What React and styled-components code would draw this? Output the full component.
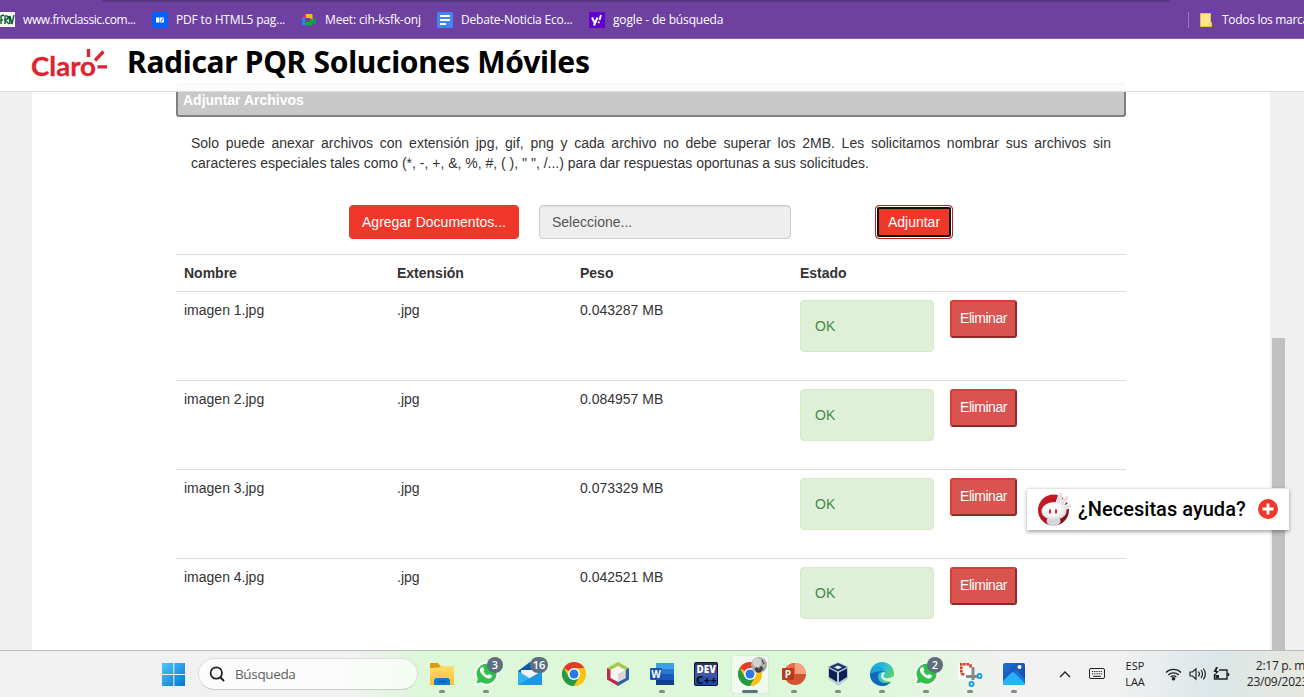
import React from "react";
import styled, { createGlobalStyle } from "styled-components";

const Global = createGlobalStyle`
  * { box-sizing: border-box; }
  html, body { margin: 0; padding: 0; overflow: hidden; }
  body { font-family: "Liberation Sans", Arial, sans-serif; font-size: 14px; color: #333; background: #fff; }
`;

const Screen = styled.div`
  width: 1304px;
  height: 697px;
  display: flex;
  flex-direction: column;
  overflow: hidden;
  position: relative;
`;

/* ---------- bookmarks bar ---------- */
const BookmarksBar = styled.nav`
  flex: none;
  height: 39px;
  display: flex;
  align-items: center;
  background: #6e41a0;
  border-bottom: 1px solid #8c5fb4;
  position: relative;
  z-index: 3;
  padding-top: 1px;
`;
const TabStripEdge = styled.div`
  position: absolute;
  top: 0;
  left: 102px;
  width: 1068px;
  height: 2px;
  background: #57357f;
  border-radius: 0 0 6px 6px / 0 0 2px 2px;
`;
const Bookmark = styled.div`
  flex: none;
  display: flex;
  align-items: center;
  gap: ${(p) => p.$gap || 8}px;
  width: ${(p) => p.$w}px;
  height: 100%;
  white-space: nowrap;
  font-family: "Open Sans", "Noto Sans", sans-serif;
  font-size: 12px;
  letter-spacing: ${(p) => p.$ls || 0}px;
  color: #fff;
  svg { flex: none; display: block; }
`;
const Spacer = styled.div`
  flex: 1;
`;
const BarDivider = styled.div`
  width: 1px;
  height: 16px;
  margin-right: 11px;
  background: #9a78bd;
`;

/* ---------- site header ---------- */
const SiteHeader = styled.header`
  flex: none;
  height: 53px;
  display: flex;
  align-items: flex-start;
  padding: 8px 0 0 30px;
  background: rgba(255, 255, 255, 0.95);
  border-bottom: 1px solid #dcdcdc;
  position: relative;
  z-index: 2;
`;
const Title = styled.h1`
  margin: -7px 0 0 17px;
  font: 700 30px/44px "Noto Sans", sans-serif;
  letter-spacing: ${(p) => p.$ls}px;
  color: #000;
  white-space: nowrap;
`;

/* ---------- page ---------- */
const Page = styled.main`
  flex: none;
  height: 611px;
  margin-top: -53px;
  display: flex;
  background: #f0f0f0;
`;
const Sheet = styled.section`
  width: 1238px;
  margin-left: 32px;
  padding: 44px 144px 0;
  background: #fff;
`;
const ScrollTrack = styled.div`
  width: 34px;
  padding: 299px 0 0 2px;
`;
const ScrollThumb = styled.div`
  width: 13px;
  height: 312px;
  background: #c1c1c1;
`;
const PanelHeading = styled.div`
  height: 34px;
  padding: 0 5px;
  border: 2px solid #808080;
  border-radius: 3px;
  background: #c8c8c8;
  color: #fff;
  font-weight: 700;
  line-height: 30px;
`;
const Notice = styled.p`
  margin: 16px 15px 32px;
  line-height: 20px;
  text-align: justify;
`;
const UploadRow = styled.div`
  display: flex;
  height: 34px;
  margin: 0 0 15px 173px;
`;
const RedButton = styled.button`
  width: ${(p) => p.$w}px;
  height: 34px;
  padding: 0;
  border: 1px solid ${(p) => (p.$focused ? "#b8231b" : "#e8352a")};
  border-radius: 4px;
  background: #ef382a;
  box-shadow: ${(p) => (p.$focused ? "inset 0 0 0 1px #fff, inset 0 0 0 3px #101010" : "none")};
  color: #fff;
  font: 14px "Liberation Sans", Arial, sans-serif;
`;
const FileField = styled.div`
  width: 252px;
  height: 34px;
  margin: 0 84px 0 20px;
  padding: 0 12px;
  border: 1px solid #ccc;
  border-radius: 4px;
  background: #eee;
  box-shadow: inset 0 1px 1px rgba(0, 0, 0, 0.075);
  color: #555;
  line-height: 32px;
`;
const Row = styled.div`
  display: grid;
  grid-template-columns: 213px 183px 220px 150px 184px;
  height: ${(p) => (p.$head ? 37 : 89)}px;
  border-top: 1px solid #ddd;
  font-weight: ${(p) => (p.$head ? 700 : 400)};
`;
const Cell = styled.div`
  padding: 8px;
  line-height: 20px;
`;
const Status = styled.div`
  height: 52px;
  padding: 15px 14px;
  border: 1px solid #d6e9c6;
  border-radius: 4px;
  background: #dff0d8;
  color: #468847;
`;
const DeleteButton = styled.button`
  display: block;
  width: 67px;
  height: 38px;
  padding: 0 0 2px;
  border: 2px solid;
  border-color: #d43f3a #8c2a27 #8c2a27 #d43f3a;
  border-radius: 3px;
  background: #d9534f;
  color: #fff;
  font: 14px "Liberation Sans", Arial, sans-serif;
  letter-spacing: -0.45px;
`;

/* ---------- help widget ---------- */
const HelpWidget = styled.aside`
  position: absolute;
  left: 1027px;
  top: 488px;
  z-index: 4;
  width: 262px;
  height: 42px;
  display: flex;
  align-items: center;
  padding-left: 9px;
  background: #fff;
  border-top: 1px solid #e4e4e4;
  box-shadow: 0 2px 4px rgba(0, 0, 0, 0.35);
  svg { flex: none; margin-top: -1px; }
`;
const HelpText = styled.span`
  width: 186px;
  margin-top: -2px;
  padding-left: 6px;
  font: 500 20px/24px Roboto, sans-serif;
  letter-spacing: 0.03px;
  color: #000;
  white-space: nowrap;
`;

/* ---------- taskbar ---------- */
const Taskbar = styled.footer`
  flex: none;
  height: 47px;
  display: flex;
  align-items: center;
  padding-left: 162px;
  border-top: 1px solid #b8bdb8;
  background: linear-gradient(90deg, #f1f1f1 0, #f0f1f0 355px, #ddf7d9 420px, #dcf8d8 820px, #e2f6df 920px, #f1f1f1 1010px, #f0f1f1 1120px, #dce6e8 1215px, #e6e8df 1304px);
  position: relative;
  z-index: 5;
  font-family: "Open Sans", "Noto Sans", sans-serif;
  > svg { flex: none; }
`;
const SearchBox = styled.div`
  flex: none;
  width: 220px;
  height: 32px;
  margin: 0 2px 0 12px;
  padding-left: 10px;
  display: flex;
  align-items: center;
  gap: 10px;
  border: 1px solid #dcdfdc;
  border-bottom-color: #c8cdc8;
  border-radius: 16px;
  background: linear-gradient(90deg, #fcfcfc 60%, #f4fcf3);
  color: #606060;
  font-size: 13.5px;
  letter-spacing: -0.35px;
`;
const AppCell = styled.div`
  position: relative;
  flex: none;
  width: 44px;
  height: 46px;
  svg { display: block; position: relative; }
`;
const ActivePlate = styled.div`
  position: absolute;
  left: 3px;
  top: 4px;
  width: 38px;
  height: 39px;
  border-radius: 4px;
  background: #f0fbee;
  border: 1px solid #d8ecd5;
`;
const RunMark = styled.div`
  position: absolute;
  bottom: 4px;
  left: ${(p) => (p.$active ? 14 : 19)}px;
  width: ${(p) => (p.$active ? 16 : 6)}px;
  height: 3px;
  border-radius: 2px;
  background: ${(p) => (p.$active ? "#5b7184" : "#828c82")};
`;
const Badge = styled.span`
  position: absolute;
  top: 6px;
  left: ${(p) => (p.$wide ? 22 : 23)}px;
  width: ${(p) => (p.$wide ? 18 : 16)}px;
  height: 16px;
  border-radius: 8px;
  background: #5d6f7e;
  color: #fff;
  font-size: 11px;
  font-weight: 600;
  line-height: 16px;
  text-align: center;
`;
const Tray = styled.div`
  flex: none;
  display: flex;
  align-items: center;
  height: 46px;
  padding-left: 22px;
  color: #1c1c1c;
`;
const TrayText = styled.div`
  width: ${(p) => p.$w}px;
  margin-left: ${(p) => p.$ml}px;
  text-align: ${(p) => p.$align};
  font-size: ${(p) => p.$size}px;
  line-height: 16px;
  letter-spacing: ${(p) => p.$ls || 0}px;
  white-space: nowrap;
  color: #222;
`;

/* ---------- drawings ---------- */
const ClaroLogo = () => (
  <svg width="80" height="34" viewBox="30 47 80 34">
    <text x="31" y="76" textLength="65" lengthAdjust="spacingAndGlyphs" fontFamily="Lato, sans-serif" fontWeight="700" fontSize="26.500" fill="#dc2430" stroke="#dc2430" strokeWidth=".3">Claro</text>
    <g stroke="#dc2430" strokeWidth="3.300">
      <path d="M88.500 49v8M95 60.500l8.500-9M97.500 66.800h9.500" />
    </g>
  </svg>
);

const FrivIcon = () => (
  <svg width="15" height="15" viewBox="0 0 15 15">
    <path fill="#f4f7ee" d="M0 0h15v15H0z" />
    <path d="M1 12V4l3-1M1 8h2M5 12V4c4-1 4 3 0 4l4 4M9 4l1 8M10 4l2 8 2-9" fill="none" stroke="#0e5a36" strokeWidth="1.400" />
  </svg>
);
const PdfIcon = () => (
  <svg width="16" height="16" viewBox="0 0 16 16">
    <path fill="#0061fe" d="M0 0h16v16H0z" />
    <path fill="#fff" d="M4 5.500h3.500v5H4zM8 5.500h4v5H8z" />
    <path d="M8.800 9.800l2.400-3.600" stroke="#0061fe" />
  </svg>
);
const MeetIcon = () => (
  <svg width="16" height="16" viewBox="0 0 16 16">
    <path fill="#2684fc" d="M1 6h3.500v5L4 13.500H2l-1-1z" />
    <path fill="#ea4335" d="M1 6l4-4v4z" />
    <path fill="#fbbc04" d="M5 2h5.500q1 0 1 1v5L9 6H5z" />
    <path fill="#00ac47" d="M4.500 13.500V10H9V7l3 1 2.500-3v7.500l-3-2v2l-1 1z" />
    <path fill="#6e41a0" d="M4.500 6H8.500v4h-4z" />
  </svg>
);
const DocsIcon = () => (
  <svg width="16" height="16" viewBox="0 0 16 16">
    <rect width="16" height="16" rx="1.500" fill="#4285f4" />
    <path d="M3 4h10M3 8h10M3 12h6" stroke="#fff" strokeWidth="1.800" />
  </svg>
);
const YahooIcon = () => (
  <svg width="16" height="16" viewBox="0 0 16 16">
    <path fill="#5f01d1" d="M0 0h16v16H0z" />
    <path d="M3 5.500l2.500 5M8.500 5.500l-3.500 8M12 3l-1.500 5M10 9.500l-.5 1.600" stroke="#fff" strokeWidth="2" fill="none" />
  </svg>
);
const FolderIcon = () => (
  <svg width="12" height="14" viewBox="0 0 12 14">
    <path d="M.5.5h10v9h1v4H.5z" fill="#ffe48c" stroke="#e8c24c" />
    <path d="M9.500 13v-3" stroke="#e8c24c" />
  </svg>
);
const HelpRobot = () => (
  <svg width="36" height="36" viewBox="0 0 36 36">
    <defs>
      <linearGradient id="gDisc" x1="0" y1="0" x2="1" y2="1">
        <stop stopColor="#cf1f29" />
        <stop offset=".5" stopColor="#b3141e" />
        <stop offset="1" stopColor="#6c0d15" />
      </linearGradient>
      <radialGradient id="gHead" cx=".45" cy=".4" r=".65">
        <stop offset=".5" stopColor="#fbfbfb" />
        <stop offset="1" stopColor="#cfcfd2" />
      </radialGradient>
    </defs>
    <circle cx="17.500" cy="19" r="15.500" fill="url(#gDisc)" />
    <path d="M22 12l3-9M26 13l5.500-7M28 17l6-2.500" stroke="#fff" strokeWidth="5" strokeLinecap="round" />
    <path d="M22 12l3-8.500M26 13l5-6.500M28 17l5.500-2" stroke="#e2e2e4" strokeWidth="3.400" strokeLinecap="round" />
    <ellipse cx="17.500" cy="30" rx="7" ry="5" fill="#d6d6d9" />
    <ellipse cx="18" cy="20" rx="12.500" ry="9" fill="url(#gHead)" />
    <path d="M14 18.500v4M20 18.500v4" stroke="#f02029" strokeWidth="2" />
  </svg>
);
const PlusCircle = () => (
  <svg width="20" height="20" viewBox="0 0 20 20">
    <circle cx="10" cy="10" r="10" fill="#ef3829" />
    <path d="M10 4.500v11M4.500 10h11" stroke="#fff" strokeWidth="2.800" />
  </svg>
);
const WindowsLogo = () => (
  <svg width="24" height="24" viewBox="0 0 24 24">
    <defs>
      <linearGradient id="win" x1="0" y1="0" x2="24" y2="24" gradientUnits="userSpaceOnUse">
        <stop stopColor="#4ec9fb" />
        <stop offset="1" stopColor="#0571cf" />
      </linearGradient>
    </defs>
    <path fill="url(#win)" d="M0 1h11.300v11H0zM12.300 1H23v11H12.300zM0 13h11.300v11H0zM12.300 13H23v11H12.300z" />
  </svg>
);
const SearchGlyph = () => (
  <svg width="16" height="16" viewBox="0 0 16 16" fill="none" stroke="#222" strokeWidth="1.700">
    <circle cx="7.300" cy="7" r="5.700" />
    <path d="M11.300 11.300L15 15" strokeWidth="2" />
  </svg>
);

const Explorer = () => (
  <g>
    <path d="M10 13q0-1 1-1h7l2.500 3H34v9H10z" fill="#d99b10" />
    <path d="M10 17l9.500-.5L21 15h12q1 0 1 1v18H10z" fill="url(#gFolder)" />
    <path d="M14 34v-4q0-3 3-3h10q3 0 3 3v4z" fill="#0c7bd1" />
    <path d="M17 30.500h10" stroke="#075a9e" strokeWidth="1.200" />
  </g>
);
const WhatsApp = () => (
  <g>
    <path d="M10.500 34.500l1.600-6A12 12 0 1 1 16.500 33z" fill="#fff" />
    <path d="M12.500 32.500l1.300-5A10 10 0 1 1 17.500 31.300z" fill="#30c14c" />
    <path d="M17.500 16.500c1.500-1 2 0 2.700 2 .4 1-1.200 1.500-.6 2.300 1 1.700 2 2.600 3.700 3.400 1 .4 1.200-1.400 2.200-1l2.300 1.300c.6.6-.5 2.800-2.300 3-4 .3-9.500-5-9.500-8.500 0-1 .5-1.800 1.500-2.500z" fill="#fff" />
  </g>
);
const Mail = () => (
  <g>
    <path d="M10 20L22 11l12 9v7H10z" fill="#0b5aa5" />
    <path d="M13 19h18v5l-9 4-9-5z" fill="#f2f6f8" />
    <path d="M10 20l12 7.500L34 20v14H10z" fill="#31b3f2" />
    <path d="M10 34l24-14v14z" fill="#1c97e3" />
  </g>
);
const Chrome = () => (
  <g>
    <circle cx="22" cy="23" r="12" fill="#fbc116" />
    <path d="M22 23L11.600 17A12 12 0 0 1 32.400 17H22z" fill="#e33b2e" />
    <path d="M11.600 17A12 12 0 0 0 22 35l5.200-9L22 23l-5.200 3z" fill="#229a48" />
    <path d="M22 23V17h10.400A12 12 0 0 1 22 35l5.200-9z" fill="#fbc116" />
    <circle cx="22" cy="23" r="6" fill="#fff" />
    <circle cx="22" cy="23" r="4.500" fill="#2d78e8" />
  </g>
);
const Cube = () => (
  <g>
    <path d="M22 11l11 6-11 6-11-6z" fill="#a8c84a" />
    <path d="M11 17l11 6v12l-11-6.500z" fill="#b92b50" />
    <path d="M33 17l-11 6v12l11-6.500z" fill="#2a62a6" />
    <path d="M22 15l7.500 4v8L22 31l-7.500-4v-8z" fill="#f7f5ef" />
    <path d="M22 23l7.500-4v8L22 31z" fill="#d8d8d4" />
  </g>
);
const Word = () => (
  <g>
    <path fill="#3fa0e8" d="M16 12h18v6H16z" />
    <path fill="#2679cf" d="M16 18h18v5H16z" />
    <path fill="#185abd" d="M16 23h18v6H16z" />
    <path fill="#103f91" d="M16 29h18v5H16z" />
    <rect x="10" y="17" width="12" height="12" rx="1" fill="#1a56b4" />
    <text x="16" y="26.500" textAnchor="middle" fontSize="10" fontWeight="700" fill="#fff">W</text>
  </g>
);
const DevCpp = () => (
  <g fontFamily="Open Sans, sans-serif" fontWeight="800">
    <rect x="10.500" y="11.500" width="23" height="23" rx="1" fill="url(#gDev)" stroke="#10132c" />
    <text x="12.500" y="21.500" textLength="19.500" lengthAdjust="spacingAndGlyphs" fontSize="10" fill="#fff">DEV</text>
    <text x="12" y="32.500" textLength="21" lengthAdjust="spacingAndGlyphs" fontSize="10" fill="#091434">C++</text>
  </g>
);
const ChromeProfile = () => (
  <g>
    <Chrome />
    <circle cx="31" cy="14" r="8" fill="#a9a9a7" />
    <circle cx="29" cy="11.500" r="4.500" fill="#d2d2d0" />
    <path d="M27 18l2-1.500 2 2 2-3 2 2-3 3.500h-3zM34 9l2 4" stroke="#333" fill="#4a4a4a" />
  </g>
);
const PowerPoint = () => (
  <g>
    <circle cx="23" cy="23" r="11" fill="#d25230" />
    <path d="M23 12a11 11 0 0 1 11 11H23z" fill="#f6a184" />
    <path d="M12 23a11 11 0 0 1 11-11v11z" fill="#ea6c48" />
    <rect x="10" y="17" width="12" height="12" rx="1" fill="#bd391d" />
    <text x="16" y="26.500" textAnchor="middle" fontSize="10" fontWeight="700" fill="#fff">P</text>
  </g>
);
const VirtualBox = () => (
  <g>
    <path d="M22 11l10 4.500v12L22 35l-10-7.500v-12z" fill="#b9cadb" />
    <path d="M22 12l9 4-9 4.500-9-4.500z" fill="#163465" />
    <path d="M13 17.500l8 4V31l-8-5zM31 17.500l-8 4V31l8-5z" fill="#0d2150" />
    <path d="M18 16.200l4-1.700 4 1.700-4 2z" fill="#e6eef5" />
  </g>
);
const Edge = () => (
  <g>
    <circle cx="22" cy="23" r="12" fill="url(#gEdge)" />
    <path d="M10 23c1-8 14-9 15-1-3-3-8 0-7 5 1 4 6 7 13 3.800A12 12 0 0 1 10 23z" fill="#1267b8" />
    <path d="M10 23c1-8 14-9 15-1-2-3-9-2-15 1z" fill="#1ba5d9" />
    <path d="M24.500 21c1 2-1.500 3-1 4.500 1 2.500 7 2.500 11.500-1.500v3l-3 3.500c-5 1-11-1.500-11-5.500 0-2 1.500-4 3.500-4z" fill="#dff7dc" />
  </g>
);
const Snip = () => (
  <g>
    <path fill="#fff" fillOpacity=".75" d="M10 12h17v16H10z" />
    <path d="M21 13.300H13.300V22.500M13.300 23.300H17M22.500 13.300V17" fill="none" stroke="#d83b1e" strokeWidth="2.600" strokeDasharray="2.600 .7" />
    <path d="M25 16v13M18 25.500h11" stroke="#85898d" strokeWidth="3" />
    <g fill="#fff" stroke="#1d9fe0" strokeWidth="2">
      <circle cx="31.500" cy="25" r="2" />
      <circle cx="23.500" cy="33" r="2" />
    </g>
  </g>
);
const Photos = () => (
  <g>
    <rect x="11" y="12" width="22" height="22" rx="2" fill="url(#gPhoto)" />
    <path d="M11 30l8-8q2-2 4 0l10 10q-.3 2-2 2H13q-2 0-2-2z" fill="#2ab0f5" />
    <path d="M20.500 21.200q1.500-.8 2.500.8l10 10v-4l-7-7.500q-3-2.500-5.500.7z" fill="#1770dc" />
    <circle cx="27.500" cy="16" r="2" fill="#fff" />
  </g>
);

const TrayIcon = styled.svg`
  display: block;
  flex: none;
  margin-left: ${(p) => p.$ml || 0}px;
`;
const ChevronUp = () => (
  <TrayIcon width="14" height="10" viewBox="0 0 14 10">
    <path d="M2 8l5-5 5 5" fill="none" stroke="#222" strokeWidth="1.400" />
  </TrayIcon>
);
const Keyboard = () => (
  <TrayIcon $ml={17} width="16" height="12" viewBox="0 0 16 12">
    <rect x=".5" y=".5" width="15" height="10" rx="1.500" fill="none" stroke="#222" />
    <path d="M3 3.500h10M3 5.800h10" stroke="#222" strokeWidth="1.100" strokeDasharray="1.200 1" />
    <path d="M4 8.300h8" stroke="#222" />
  </TrayIcon>
);
const StatusGlyphs = () => (
  <TrayIcon $ml={13} width="66" height="18" viewBox="0 0 66 18" fill="none" stroke="#222" strokeWidth="1.200">
    <path d="M1 7.500a10.500 10.500 0 0 1 15 0M3.300 10a7.200 7.200 0 0 1 10.400 0M5.600 12.200a4 4 0 0 1 5.800 0" />
    <circle cx="8.500" cy="13.800" r="1.200" fill="#222" />
    <path d="M25 7h2.500L31 3.800v10.400L27.500 11H25zM33.500 6.500q1.800 2.500 0 5M36 5q3 4 0 8M38.300 3.500q4.200 5.500 0 11" />
    <path d="M54 5h8v9H49.500V9M63.500 8v3" strokeWidth="1.400" />
    <path d="M51 2l-2.500 5H51l-1.500 4 4.500-5h-2.500L53 2z" fill="#222" stroke="none" />
    <path d="M50.500 10h3.500V13h-3.500z" fill="#222" stroke="none" />
  </TrayIcon>
);

const files = [
  ["imagen 1.jpg", ".jpg", "0.043287 MB"],
  ["imagen 2.jpg", ".jpg", "0.084957 MB"],
  ["imagen 3.jpg", ".jpg", "0.073329 MB"],
  ["imagen 4.jpg", ".jpg", "0.042521 MB"],
];

const apps = [
  { Icon: Explorer, running: true },
  { Icon: WhatsApp, running: true, badge: "3" },
  { Icon: Mail, badge: "16" },
  { Icon: Chrome },
  { Icon: Cube },
  { Icon: Word, running: true },
  { Icon: DevCpp },
  { Icon: ChromeProfile, running: true, active: true },
  { Icon: PowerPoint, running: true },
  { Icon: VirtualBox, running: true },
  { Icon: Edge, running: true },
  { Icon: WhatsApp, running: true, badge: "2" },
  { Icon: Snip, running: true },
  { Icon: Photos, running: true },
];

const AppGradients = () => (
  <svg width="0" height="0" aria-hidden="true">
    <defs>
      <linearGradient id="gFolder" x1="0" y1="0" x2="0" y2="1">
        <stop stopColor="#ffdd70" />
        <stop offset="1" stopColor="#fbbd26" />
      </linearGradient>
      <linearGradient id="gDev" x1="0" y1="0" x2="0" y2="1">
        <stop stopColor="#2a2c4c" />
        <stop offset=".5" stopColor="#4a56a8" />
        <stop offset="1" stopColor="#0c4aa8" />
      </linearGradient>
      <linearGradient id="gEdge" x1="0" y1="0" x2="1" y2=".6">
        <stop stopColor="#1a9be0" />
        <stop offset=".6" stopColor="#2fc1d5" />
        <stop offset="1" stopColor="#62d84f" />
      </linearGradient>
      <linearGradient id="gPhoto" x1="0" y1="0" x2="1" y2="1">
        <stop stopColor="#1c6fd8" />
        <stop offset="1" stopColor="#1b3f9c" />
      </linearGradient>
    </defs>
  </svg>
);

export default function App() {
  return (
    <Screen>
      <Global />
      <BookmarksBar>
        <TabStripEdge />
        <Bookmark $w={152} $ls={-0.4}><FrivIcon />www.frivclassic.com...</Bookmark>
        <Bookmark $w={149} $ls={-0.17}><PdfIcon />PDF to HTML5 pag...</Bookmark>
        <Bookmark $w={136} $ls={-0.15}><MeetIcon />Meet: cih-ksfk-onj</Bookmark>
        <Bookmark $w={152} $ls={-0.2}><DocsIcon />Debate-Noticia Eco...</Bookmark>
        <Bookmark $w={140} $ls={-0.15}><YahooIcon />gogle - de búsqueda</Bookmark>
        <Spacer />
        <BarDivider />
        <Bookmark $w={104} $gap={10} $ls={-0.3}><FolderIcon />Todos los marcadores</Bookmark>
      </BookmarksBar>

      <SiteHeader>
        <ClaroLogo />
        <Title $ls={-0.3}>Radicar PQR Soluciones Móviles</Title>
      </SiteHeader>

      <Page>
        <Sheet>
          <PanelHeading>Adjuntar Archivos</PanelHeading>
          <Notice>
            Solo puede anexar archivos con extensión jpg, gif, png y cada archivo no debe superar los 2MB. Les solicitamos nombrar sus archivos sin
            caracteres especiales tales como (*, -, +, &amp;, %, #, ( ), " ", /...) para dar respuestas oportunas a sus solicitudes.
          </Notice>
          <UploadRow>
            <RedButton $w={170}>Agregar Documentos...</RedButton>
            <FileField>Seleccione...</FileField>
            <RedButton $w={78} $focused>Adjuntar</RedButton>
          </UploadRow>
          <Row $head>
            <Cell>Nombre</Cell>
            <Cell>Extensión</Cell>
            <Cell>Peso</Cell>
            <Cell>Estado</Cell>
          </Row>
          {files.map(([name, ext, size]) => (
            <Row key={name}>
              <Cell>{name}</Cell>
              <Cell>{ext}</Cell>
              <Cell>{size}</Cell>
              <Cell><Status>OK</Status></Cell>
              <Cell><DeleteButton>Eliminar</DeleteButton></Cell>
            </Row>
          ))}
        </Sheet>
        <ScrollTrack><ScrollThumb /></ScrollTrack>
      </Page>

      <HelpWidget>
        <HelpRobot />
        <HelpText>¿Necesitas ayuda?</HelpText>
        <PlusCircle />
      </HelpWidget>

      <Taskbar>
        <WindowsLogo />
        <SearchBox><SearchGlyph />Búsqueda</SearchBox>
        <AppGradients />
        {apps.map(({ Icon, running, active, badge }, i) => (
          <AppCell key={i}>
            {active && <ActivePlate />}
            <svg width="44" height="46" viewBox="0 0 44 46"><Icon /></svg>
            {badge && <Badge $wide={badge.length > 1}>{badge}</Badge>}
            {running && <RunMark $active={active} />}
          </AppCell>
        ))}
        <Tray>
          <ChevronUp />
          <Keyboard />
          <TrayText $w={34} $ml={13} $align="center" $size={11}>ESP<br />LAA</TrayText>
          <StatusGlyphs />
          <TrayText $w={66} $ml={11} $align="right" $size={12} $ls={-0.25}>2:17 p. m.<br />23/09/2023</TrayText>
        </Tray>
      </Taskbar>
    </Screen>
  );
}
